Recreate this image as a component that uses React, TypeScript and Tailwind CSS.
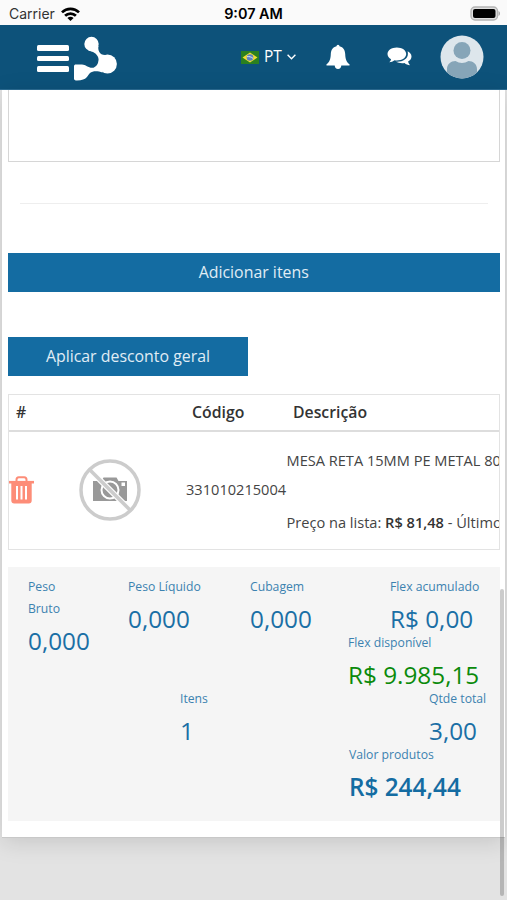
import type { ReactNode } from "react";

interface TotalProps {
  label: ReactNode;
  value: string;
  className?: string;
  valueClassName?: string;
}

function StatusBar() {
  return (
    <div className="flex h-[25px] items-center justify-between bg-[#fafafa] font-['Inter',sans-serif] text-black">
      <div className="flex w-[160px] items-center gap-[6px] pl-[9px] pt-[3px] text-[14px] leading-none text-[#333]">
        <span>Carrier</span>
        <svg width="19" height="14" viewBox="0 0 19 14" fill="none" stroke="#000" strokeWidth="2.7">
          <path d="M1 5.4C5.8.7 13.2.7 18 5.4" />
          <path d="M4.1 8.8c3-3 7.8-3 10.8 0" />
          <path d="M9.5 14 6.4 10.9c1.7-1.6 4.5-1.6 6.2 0z" fill="#000" stroke="none" />
        </svg>
      </div>
      <span className="pt-[3px] text-[14.4px] font-semibold leading-none">9:07 AM</span>
      <div className="flex w-[160px] justify-end pr-[6px] pt-[1px]">
        <svg width="31" height="15" viewBox="0 0 31 15">
          <rect x="1" y="1" width="26.5" height="13" rx="4" fill="#e0e0e0" stroke="#b4b4b4" strokeWidth="1.4" />
          <rect x="3" y="3" width="22.5" height="9" rx="2" />
          <path d="M28.5 5c2 .8 2 4.2 0 5z" fill="#aaa" />
        </svg>
      </div>
    </div>
  );
}

function Logo() {
  return (
    <svg width="44" height="46" viewBox="0 0 44 46" fill="#fff">
      <circle cx="17.5" cy="9" r="7.2" />
      <circle cx="33.5" cy="29" r="9.4" />
      <path d="M24.5 11C23.5 15 25.500 20 31 20L28.500 37.600C24 35.800 19 35.500 16 38 13.500 40 13.500 45.500 3 45.500 1 45.500 0 45 0 43.500V31.500C0 30 .7 29.500 2 29.500H8C12 29.500 14.500 33.500 19.500 32.700 24 31 26 25 23.500 21 21.500 17.500 18 16.300 14 15.500z" />
    </svg>
  );
}

function BellIcon() {
  return (
    <svg width="24" height="26" viewBox="0 0 24 26" fill="#fff">
      <path d="M10.5 2.2a1.500 1.500 0 0 1 3 0C17.3 3 19 6 19.2 10c.2 5.500 1.3 8 4.300 10.300v1.200H.5v-1.200C3.5 18 4.6 15.500 4.800 10 5 6 6.700 3 10.500 2.200z" />
      <path d="M8.7 21h6.600c0 2.500-1.300 4-3.300 4s-3.300-1.500-3.300-4z" />
    </svg>
  );
}

function ChatIcon() {
  return (
    <svg width="25" height="21" viewBox="0 0 25 21" fill="#fff">
      <path d="M9.800.5C15 .5 19.200 3.300 19.200 7S15 13.500 9.800 13.500c-.8 0-1.500-.1-2.200-.2-1.600 1.200-3.400 1.900-5.300 2 .9-.8 1.500-1.700 1.800-3C1.900 11 .5 9.200.5 7 .5 3.300 4.700.5 9.800.5z" />
      <path d="M20.600 4.300c2.300 1.100 3.900 3 3.900 5.200 0 2.100-1.300 3.900-3.400 5.100.3 1.500 1 2.600 1.900 3.600-2.100-.1-4-.9-5.500-2.200-3.300.5-6.300-.1-8.600-1.300C15.500 15.200 20.800 12 20.900 7c0-1-.1-1.900-.3-2.700z" />
    </svg>
  );
}

function Header() {
  return (
    <header className="flex h-[65px] items-center border-b border-[#2b6c93] bg-[#0d527a] text-white">
      <div className="ml-[37px] mt-[3px] flex w-8 flex-col gap-[5px]">
        <span className="h-[6px] rounded-[1.5px] bg-white" />
        <span className="h-[5px] rounded-[1.5px] bg-white" />
        <span className="h-[6px] rounded-[1.5px] bg-white" />
      </div>
      <div className="ml-[5px] mt-[2px]">
        <Logo />
      </div>
      <div className="ml-[123px] flex w-[56px] items-center">
        <svg className="shrink-0" width="18" height="13" viewBox="0 0 18 13">
          <rect width="18" height="13" fill="#2b8020" />
          <path d="M9 1.500 16.500 6.500 9 11.500 1.500 6.500z" fill="#f3dc35" />
          <circle cx="9" cy="6.500" r="3.300" fill="#5b80c0" />
          <path d="M6 5.700c2-.4 4.500.2 6 1.700" stroke="#dbe8f2" fill="none" />
        </svg>
        <span className="ml-[5px] text-[15.5px] leading-none">PT</span>
        <svg className="ml-[5px] shrink-0" width="9" height="6" viewBox="0 0 9 6" fill="none" stroke="#fff" strokeWidth="1.4">
          <path d="m.6.8 3.900 3.900L8.400.8" />
        </svg>
      </div>
      <div className="ml-[29px]">
        <BellIcon />
      </div>
      <div className="ml-[37px]">
        <ChatIcon />
      </div>
      <svg className="ml-[28px]" width="44" height="44" viewBox="0 0 44 44">
        <defs>
          <clipPath id="avatar">
            <circle cx="22" cy="22" r="21.5" />
          </clipPath>
        </defs>
        <circle cx="22" cy="22" r="21.5" fill="#dde6ec" />
        <g clipPath="url(#avatar)" fill="#86a5b8">
          <circle cx="22" cy="15.5" r="8.5" />
          <path d="M7 44V34c0-5 4-8 8.500-8 4 2.500 9 2.500 13 0C33 26 37 29 37 34v10z" />
        </g>
      </svg>
    </header>
  );
}

function TrashIcon() {
  return (
    <svg width="25" height="28" viewBox="0 0 25 28" fill="none" stroke="#fd8d78">
      <path d="M7.5 5V3.700C7.500 2.200 8.300 1.200 9.800 1.200h5.400c1.500 0 2.300 1 2.300 2.500V5" strokeWidth="2" />
      <path d="M0 6.200h25" strokeWidth="2.6" />
      <path d="M2.300 6h20.400v18.500c0 2-1 3-3 3H5.300c-2 0-3-1-3-3z" fill="#fd8d78" stroke="none" />
      <path d="M8 10v13.500M12.500 10v13.500M17 10v13.500" stroke="#fff" strokeWidth="2" />
    </svg>
  );
}

function NoPhoto() {
  return (
    <svg width="62" height="62" viewBox="0 0 62 62" fill="none">
      <path d="M14 22h8.500l2-3.500h13l2 3.500H48v20H14z" fill="#999" />
      <circle cx="31" cy="31" r="8.5" stroke="#fff" strokeWidth="2" />
      <rect x="42.5" y="23.5" width="3.5" height="3.5" fill="#fff" />
      <path d="m12 12 38 38" stroke="#fff" strokeWidth="6" />
      <circle cx="31" cy="31" r="29" stroke="#ccc" strokeWidth="3.5" />
      <path d="m11 11 40 40" stroke="#ccc" strokeWidth="3.5" />
    </svg>
  );
}

function Total({ label, value, className = "", valueClassName = "text-[#1a6fa5]" }: TotalProps) {
  return (
    <div className={className}>
      <div className="text-[12.2px] leading-[22px] text-[#3c82b0]">{label}</div>
      <div className={`whitespace-nowrap pt-[8px] text-[24.3px] leading-[26px] ${valueClassName}`}>{value}</div>
    </div>
  );
}

export default function App() {
  return (
    <div className="relative h-[900px] w-[507px] overflow-hidden bg-[#e3e3e3] font-['Open_Sans',sans-serif] text-[#444]">
      <StatusBar />
      <Header />

      <main className="mx-[2px] h-[748px] border-b border-[#c8c8c8] bg-white pl-[6px] pr-[5.5px] shadow-[0_4px_22px_rgba(0,0,0,0.13)]">
        <div className="h-[72px] border border-t-0 border-[#d6d6d6]" />
        <hr className="mx-3 mt-[41px] border-[#eee]" />
        <button className="mt-[49px] block h-[39px] w-full bg-[#146ca2] text-[15.9px] text-[#e0edf5]">
          Adicionar itens
        </button>
        <button className="mt-[45px] block h-[39px] w-[240px] bg-[#146ca2] text-[15.9px] text-[#e0edf5]">
          Aplicar desconto geral
        </button>

        {/* Items */}
        <div className="mt-[18px] h-[156px] overflow-hidden border border-[#e3e3e3]">
          <div className="grid h-[37px] grid-cols-[183px_101px_1fr] items-center border-b-2 border-[#ddd] pt-px text-[15.8px] font-semibold text-[#333]">
            <span className="pl-[7px]">#</span>
            <span>Código</span>
            <span>Descrição</span>
          </div>
          <div className="grid h-[117px] grid-cols-[70px_107px_100.5px_1fr] items-center text-[14.6px]">
            <div className="pb-[2px]">
              <TrashIcon />
            </div>
            <div className="pb-[2px]">
              <NoPhoto />
            </div>
            <span className="pb-px">331010215004</span>
            <div className="-mb-[4px] -mt-[3px] min-w-0 whitespace-nowrap">
              <p className="h-[62px] leading-[62px]">MESA RETA 15MM PE METAL 80</p>
              <p className="h-[62px] leading-[62px]">
                Preço na lista: <b className="font-semibold text-[#333]">R$ 81,48</b> - Último
              </p>
            </div>
          </div>
        </div>

        {/* Totals */}
        <div className="mt-[17px] h-[254px] bg-[#f5f5f5] pt-[9px]">
          <div className="flex h-[56px] pl-5">
            <Total label={<>Peso<br />Bruto</>} value="0,000" className="w-[100px]" />
            <Total label="Peso Líquido" value="0,000" className="w-[122px]" />
            <Total label="Cubagem" value="0,000" className="w-[140px]" />
            <Total label="Flex acumulado" value="R$ 0,00" />
          </div>
          <Total label="Flex disponível" value="R$ 9.985,15" className="ml-[340px]" valueClassName="text-[#0b8a0b]" />
          <div className="flex pl-[172px]">
            <Total label="Itens" value="1" className="w-[249px]" />
            <Total label="Qtde total" value="3,00" />
          </div>
          <Total label="Valor produtos" value="R$ 244,44" className="ml-[341px]" valueClassName="font-semibold text-[#146ca2]" />
        </div>
      </main>

      {/* Overlay scrollbar */}
      <div className="absolute right-[3px] top-[589px] h-[307px] w-1 rounded-full bg-black/20" />
    </div>
  );
}
